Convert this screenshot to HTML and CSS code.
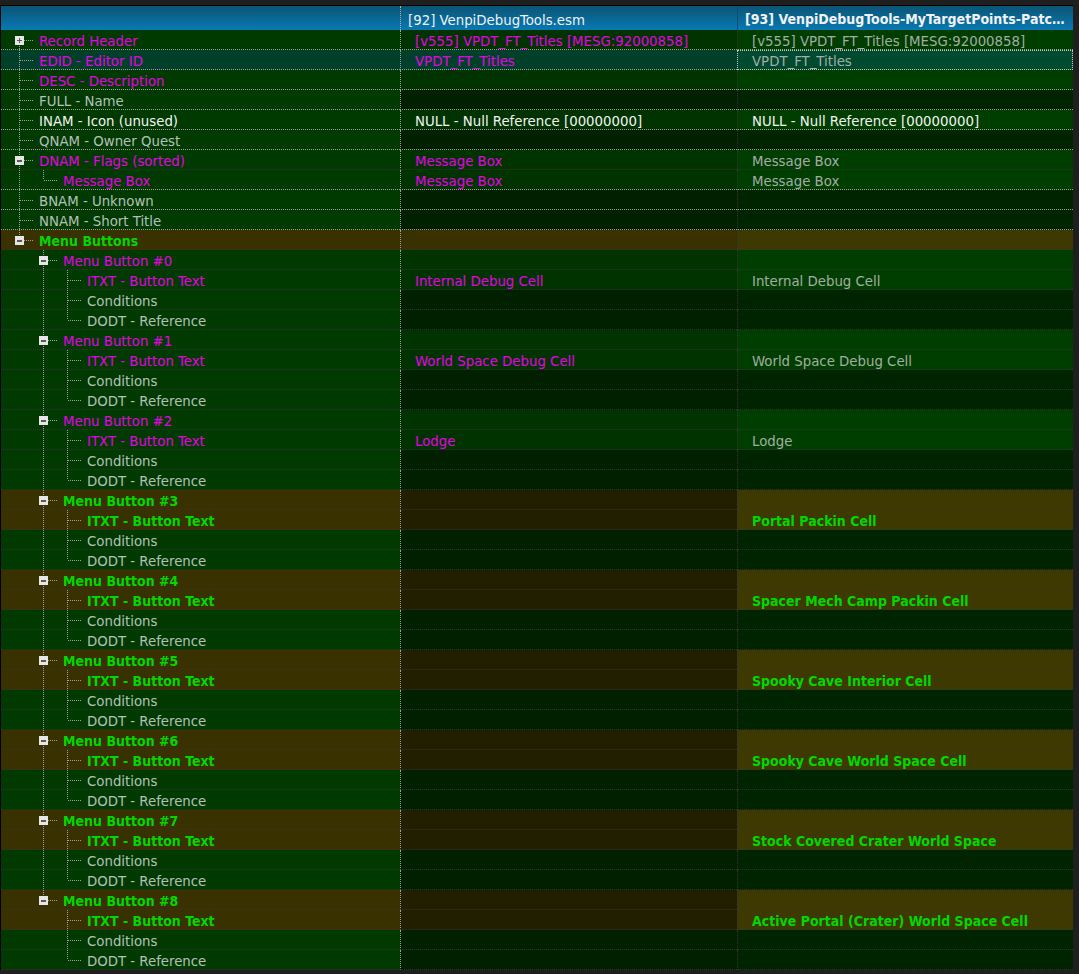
FILE: index.html
```html
<!DOCTYPE html>
<html>
<head>
<meta charset="utf-8">
<link rel="stylesheet" href="styles.css">
</head>
<body>
<div class="tree">
  <div class="head">
    <div class="h1"></div>
    <div class="h2">[92] VenpiDebugTools.esm</div>
    <div class="h3">[93] VenpiDebugTools-MyTargetPoints-Patc…</div>
  </div>

  <div class="row lb">
    <div class="c1"><span class="g gf"><span class="bx plus"></span></span><span class="t m">Record Header</span></div>
    <div class="c2 v"><span class="t m">[v555] VPDT_FT_Titles [MESG:92000858]</span></div>
    <div class="c3 v"><span class="t gv">[v555] VPDT_FT_Titles [MESG:92000858]</span></div>
  </div>
  <div class="row lb">
    <div class="c1 sel"><span class="g gt"></span><span class="t m">EDID - Editor ID</span></div>
    <div class="c2 sel"><span class="t m">VPDT_FT_Titles</span></div>
    <div class="c3 sel3 focus"><span class="t gv">VPDT_FT_Titles</span></div>
  </div>
  <div class="row lb">
    <div class="c1"><span class="g gt"></span><span class="t m">DESC - Description</span></div>
    <div class="c2 v"></div>
    <div class="c3 v"></div>
  </div>
  <div class="row lb">
    <div class="c1"><span class="g gt"></span><span class="t gl">FULL - Name</span></div>
    <div class="c2 e"></div>
    <div class="c3 e"></div>
  </div>
  <div class="row lb">
    <div class="c1"><span class="g gt"></span><span class="t w">INAM - Icon (unused)</span></div>
    <div class="c2 v"><span class="t w">NULL - Null Reference [00000000]</span></div>
    <div class="c3 v"><span class="t w">NULL - Null Reference [00000000]</span></div>
  </div>
  <div class="row lb">
    <div class="c1"><span class="g gt"></span><span class="t gl">QNAM - Owner Quest</span></div>
    <div class="c2 e"></div>
    <div class="c3 e"></div>
  </div>
  <div class="row">
    <div class="c1"><span class="g gt"><span class="bx minus"></span></span><span class="t m">DNAM - Flags (sorted)</span></div>
    <div class="c2 v"><span class="t m">Message Box</span></div>
    <div class="c3 v"><span class="t gv">Message Box</span></div>
  </div>
  <div class="row lb">
    <div class="c1"><span class="g gp"></span><span class="g ge"></span><span class="t m">Message Box</span></div>
    <div class="c2 v"><span class="t m">Message Box</span></div>
    <div class="c3 v"><span class="t gv">Message Box</span></div>
  </div>
  <div class="row lb">
    <div class="c1"><span class="g gt"></span><span class="t gl">BNAM - Unknown</span></div>
    <div class="c2 e"></div>
    <div class="c3 e"></div>
  </div>
  <div class="row lb">
    <div class="c1"><span class="g gt"></span><span class="t gl">NNAM - Short Title</span></div>
    <div class="c2 e"></div>
    <div class="c3 e"></div>
  </div>
  <div class="row">
    <div class="c1 ol"><span class="g ge"><span class="bx minus"></span></span><span class="t gr">Menu Buttons</span></div>
    <div class="c2 ol"></div>
    <div class="c3 ol3"></div>
  </div>

  <!-- Menu Button #0 -->
  <div class="row">
    <div class="c1"><span class="g gn"></span><span class="g gt"><span class="bx minus"></span></span><span class="t m">Menu Button #0</span></div>
    <div class="c2 v"></div>
    <div class="c3 v"></div>
  </div>
  <div class="row">
    <div class="c1"><span class="g gn"></span><span class="g gp"></span><span class="g gt"></span><span class="t m">ITXT - Button Text</span></div>
    <div class="c2 v"><span class="t m">Internal Debug Cell</span></div>
    <div class="c3 v"><span class="t gv">Internal Debug Cell</span></div>
  </div>
  <div class="row">
    <div class="c1"><span class="g gn"></span><span class="g gp"></span><span class="g gt"></span><span class="t gl">Conditions</span></div>
    <div class="c2 e"></div>
    <div class="c3 e"></div>
  </div>
  <div class="row">
    <div class="c1"><span class="g gn"></span><span class="g gp"></span><span class="g ge"></span><span class="t gl">DODT - Reference</span></div>
    <div class="c2 e"></div>
    <div class="c3 e"></div>
  </div>

  <!-- Menu Button #1 -->
  <div class="row">
    <div class="c1"><span class="g gn"></span><span class="g gt"><span class="bx minus"></span></span><span class="t m">Menu Button #1</span></div>
    <div class="c2 v"></div>
    <div class="c3 v"></div>
  </div>
  <div class="row">
    <div class="c1"><span class="g gn"></span><span class="g gp"></span><span class="g gt"></span><span class="t m">ITXT - Button Text</span></div>
    <div class="c2 v"><span class="t m">World Space Debug Cell</span></div>
    <div class="c3 v"><span class="t gv">World Space Debug Cell</span></div>
  </div>
  <div class="row">
    <div class="c1"><span class="g gn"></span><span class="g gp"></span><span class="g gt"></span><span class="t gl">Conditions</span></div>
    <div class="c2 e"></div>
    <div class="c3 e"></div>
  </div>
  <div class="row">
    <div class="c1"><span class="g gn"></span><span class="g gp"></span><span class="g ge"></span><span class="t gl">DODT - Reference</span></div>
    <div class="c2 e"></div>
    <div class="c3 e"></div>
  </div>

  <!-- Menu Button #2 -->
  <div class="row">
    <div class="c1"><span class="g gn"></span><span class="g gt"><span class="bx minus"></span></span><span class="t m">Menu Button #2</span></div>
    <div class="c2 v"></div>
    <div class="c3 v"></div>
  </div>
  <div class="row">
    <div class="c1"><span class="g gn"></span><span class="g gp"></span><span class="g gt"></span><span class="t m">ITXT - Button Text</span></div>
    <div class="c2 v"><span class="t m">Lodge</span></div>
    <div class="c3 v"><span class="t gv">Lodge</span></div>
  </div>
  <div class="row">
    <div class="c1"><span class="g gn"></span><span class="g gp"></span><span class="g gt"></span><span class="t gl">Conditions</span></div>
    <div class="c2 e"></div>
    <div class="c3 e"></div>
  </div>
  <div class="row">
    <div class="c1"><span class="g gn"></span><span class="g gp"></span><span class="g ge"></span><span class="t gl">DODT - Reference</span></div>
    <div class="c2 e"></div>
    <div class="c3 e"></div>
  </div>

  <!-- Menu Button #3 -->
  <div class="row">
    <div class="c1 ol"><span class="g gn"></span><span class="g gt"><span class="bx minus"></span></span><span class="t gr">Menu Button #3</span></div>
    <div class="c2 od"></div>
    <div class="c3 ol3"></div>
  </div>
  <div class="row">
    <div class="c1 ol"><span class="g gn"></span><span class="g gp"></span><span class="g gt"></span><span class="t gr">ITXT - Button Text</span></div>
    <div class="c2 od"></div>
    <div class="c3 ol3"><span class="t gr">Portal Packin Cell</span></div>
  </div>
  <div class="row">
    <div class="c1"><span class="g gn"></span><span class="g gp"></span><span class="g gt"></span><span class="t gl">Conditions</span></div>
    <div class="c2 e"></div>
    <div class="c3 e"></div>
  </div>
  <div class="row">
    <div class="c1"><span class="g gn"></span><span class="g gp"></span><span class="g ge"></span><span class="t gl">DODT - Reference</span></div>
    <div class="c2 e"></div>
    <div class="c3 e"></div>
  </div>

  <!-- Menu Button #4 -->
  <div class="row">
    <div class="c1 ol"><span class="g gn"></span><span class="g gt"><span class="bx minus"></span></span><span class="t gr">Menu Button #4</span></div>
    <div class="c2 od"></div>
    <div class="c3 ol3"></div>
  </div>
  <div class="row">
    <div class="c1 ol"><span class="g gn"></span><span class="g gp"></span><span class="g gt"></span><span class="t gr">ITXT - Button Text</span></div>
    <div class="c2 od"></div>
    <div class="c3 ol3"><span class="t gr">Spacer Mech Camp Packin Cell</span></div>
  </div>
  <div class="row">
    <div class="c1"><span class="g gn"></span><span class="g gp"></span><span class="g gt"></span><span class="t gl">Conditions</span></div>
    <div class="c2 e"></div>
    <div class="c3 e"></div>
  </div>
  <div class="row">
    <div class="c1"><span class="g gn"></span><span class="g gp"></span><span class="g ge"></span><span class="t gl">DODT - Reference</span></div>
    <div class="c2 e"></div>
    <div class="c3 e"></div>
  </div>

  <!-- Menu Button #5 -->
  <div class="row">
    <div class="c1 ol"><span class="g gn"></span><span class="g gt"><span class="bx minus"></span></span><span class="t gr">Menu Button #5</span></div>
    <div class="c2 od"></div>
    <div class="c3 ol3"></div>
  </div>
  <div class="row">
    <div class="c1 ol"><span class="g gn"></span><span class="g gp"></span><span class="g gt"></span><span class="t gr">ITXT - Button Text</span></div>
    <div class="c2 od"></div>
    <div class="c3 ol3"><span class="t gr">Spooky Cave Interior Cell</span></div>
  </div>
  <div class="row">
    <div class="c1"><span class="g gn"></span><span class="g gp"></span><span class="g gt"></span><span class="t gl">Conditions</span></div>
    <div class="c2 e"></div>
    <div class="c3 e"></div>
  </div>
  <div class="row">
    <div class="c1"><span class="g gn"></span><span class="g gp"></span><span class="g ge"></span><span class="t gl">DODT - Reference</span></div>
    <div class="c2 e"></div>
    <div class="c3 e"></div>
  </div>

  <!-- Menu Button #6 -->
  <div class="row">
    <div class="c1 ol"><span class="g gn"></span><span class="g gt"><span class="bx minus"></span></span><span class="t gr">Menu Button #6</span></div>
    <div class="c2 od"></div>
    <div class="c3 ol3"></div>
  </div>
  <div class="row">
    <div class="c1 ol"><span class="g gn"></span><span class="g gp"></span><span class="g gt"></span><span class="t gr">ITXT - Button Text</span></div>
    <div class="c2 od"></div>
    <div class="c3 ol3"><span class="t gr">Spooky Cave World Space Cell</span></div>
  </div>
  <div class="row">
    <div class="c1"><span class="g gn"></span><span class="g gp"></span><span class="g gt"></span><span class="t gl">Conditions</span></div>
    <div class="c2 e"></div>
    <div class="c3 e"></div>
  </div>
  <div class="row">
    <div class="c1"><span class="g gn"></span><span class="g gp"></span><span class="g ge"></span><span class="t gl">DODT - Reference</span></div>
    <div class="c2 e"></div>
    <div class="c3 e"></div>
  </div>

  <!-- Menu Button #7 -->
  <div class="row">
    <div class="c1 ol"><span class="g gn"></span><span class="g gt"><span class="bx minus"></span></span><span class="t gr">Menu Button #7</span></div>
    <div class="c2 od"></div>
    <div class="c3 ol3"></div>
  </div>
  <div class="row">
    <div class="c1 ol"><span class="g gn"></span><span class="g gp"></span><span class="g gt"></span><span class="t gr">ITXT - Button Text</span></div>
    <div class="c2 od"></div>
    <div class="c3 ol3"><span class="t gr">Stock Covered Crater World Space</span></div>
  </div>
  <div class="row">
    <div class="c1"><span class="g gn"></span><span class="g gp"></span><span class="g gt"></span><span class="t gl">Conditions</span></div>
    <div class="c2 e"></div>
    <div class="c3 e"></div>
  </div>
  <div class="row">
    <div class="c1"><span class="g gn"></span><span class="g gp"></span><span class="g ge"></span><span class="t gl">DODT - Reference</span></div>
    <div class="c2 e"></div>
    <div class="c3 e"></div>
  </div>

  <!-- Menu Button #8 -->
  <div class="row">
    <div class="c1 ol"><span class="g gn"></span><span class="g ge"><span class="bx minus"></span></span><span class="t gr">Menu Button #8</span></div>
    <div class="c2 od"></div>
    <div class="c3 ol3"></div>
  </div>
  <div class="row">
    <div class="c1 ol"><span class="g gn"></span><span class="g gn"></span><span class="g gt"></span><span class="t gr">ITXT - Button Text</span></div>
    <div class="c2 od"></div>
    <div class="c3 ol3"><span class="t gr">Active Portal (Crater) World Space Cell</span></div>
  </div>
  <div class="row">
    <div class="c1"><span class="g gn"></span><span class="g gn"></span><span class="g gt"></span><span class="t gl">Conditions</span></div>
    <div class="c2 e"></div>
    <div class="c3 e"></div>
  </div>
  <div class="row">
    <div class="c1"><span class="g gn"></span><span class="g gn"></span><span class="g ge"></span><span class="t gl">DODT - Reference</span></div>
    <div class="c2 e"></div>
    <div class="c3 e"></div>
  </div>
</div>
</body>
</html>
```

FILE: styles.css
```css
html, body {
  margin: 0;
  padding: 0;
  background: #1f1f1f;
}
body {
  font-family: "DejaVu Sans Condensed", "DejaVu Sans", sans-serif;
  font-stretch: condensed;
  font-size: 14.8px;
  color: #fff;
}
.tree {
  margin-top: 5px;
  width: 1072px;
  border-left: 1px solid #000;
  border-top: 1px solid #000;
}
.head {
  display: grid;
  grid-template-columns: 399px 337px 336px;
  height: 24px;
  background: linear-gradient(to bottom, #0b5574, #0879b3);
}
.head > div {
  box-sizing: border-box;
  height: 24px;
  padding: 3px 0 0 7px;
  line-height: 21px;
  white-space: nowrap;
  overflow: hidden;
  color: #f2f2f2;
}
.h2 {
  border-left: 1px dotted #b0b0b0;
}
.h3 {
  border-left: 1px solid #0a4f70;
  font-weight: bold;
  font-size: 14px;
  color: #fff;
}
.row {
  display: grid;
  grid-template-columns: 399px 337px 336px;
  height: 20px;
}
.row > div {
  box-sizing: border-box;
  height: 20px;
  border-bottom: 1px dotted #333;
  white-space: nowrap;
  overflow: visible;
}
.row.lb > div {
  border-bottom-color: #a0a0a0;
}
.c1 {
  display: flex;
  padding-left: 11px;
  background: #003a00;
}
.c2 {
  border-left: 1px dotted #a0a0a0;
  padding-left: 14px;
}
.c3 {
  border-left: 1px dotted #333;
  padding-left: 14px;
}
.v { background: #003300; }
.c3.v { background: #003e00; }
.e { background: #002000; }
.c3.e { background: #002300; }
.ol { background: #3a3100; }
.ol3 { background: #3e3900; }
.od { background: #221f00; }
.sel { background: #00402a; }
.sel3 { background: #004a30; }
.focus {
  outline: 1px dotted #c8c8c8;
  outline-offset: -1px;
}

.t {
  display: block;
  line-height: 18px;
  padding-top: 2px;
}
.c1 .t { margin-left: 3px; }
.m { color: #e800e8; }
.gl { color: #b4c0ba; }
.gv { color: #a4aca6; }
.w { color: #f4f4f4; }
.gr { color: #00d800; font-weight: bold; font-size: 14px; }

/* tree guides */
.g {
  flex: none;
  width: 24px;
  height: 20px;
  display: flex;
  align-items: flex-start;
  background-repeat: no-repeat;
}
.gp {
  background-image: repeating-linear-gradient(to bottom, #a0a0a0 0 1px, transparent 1px 2px);
  background-size: 1px 20px;
  background-position: 7px 0;
}
.gt {
  background-image:
    repeating-linear-gradient(to bottom, #a0a0a0 0 1px, transparent 1px 2px),
    repeating-linear-gradient(to right, #a0a0a0 0 1px, transparent 1px 2px);
  background-size: 1px 20px, 13px 1px;
  background-position: 7px 0, 8px 10px;
}
.ge {
  background-image:
    repeating-linear-gradient(to bottom, #a0a0a0 0 1px, transparent 1px 2px),
    repeating-linear-gradient(to right, #a0a0a0 0 1px, transparent 1px 2px);
  background-size: 1px 10px, 13px 1px;
  background-position: 7px 0, 8px 10px;
}
.gf {
  background-image:
    repeating-linear-gradient(to bottom, #a0a0a0 0 1px, transparent 1px 2px),
    repeating-linear-gradient(to right, #a0a0a0 0 1px, transparent 1px 2px);
  background-size: 1px 10px, 13px 1px;
  background-position: 7px 10px, 8px 10px;
}
.bx {
  display: block;
  width: 9px;
  height: 9px;
  margin: 6px 0 0 3px;
  background-color: #e6e6e6;
  background-repeat: no-repeat;
}
.bx.minus {
  background-image: linear-gradient(#5a5a5a, #5a5a5a);
  background-size: 5px 2px;
  background-position: 2px 3.5px;
}
.bx.plus {
  background-image: linear-gradient(#5a5a5a, #5a5a5a), linear-gradient(#5a5a5a, #5a5a5a);
  background-size: 5px 1px, 1px 5px;
  background-position: 2px 4px, 4px 2px;
}
```
